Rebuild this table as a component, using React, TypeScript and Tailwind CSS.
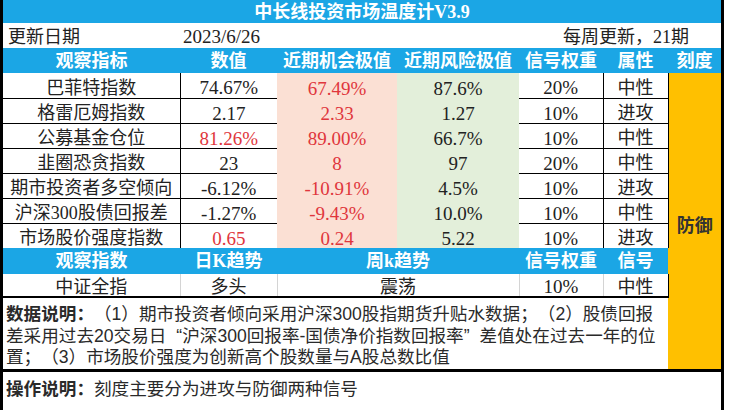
import React from "react";

const blue = "bg-[#1ba6e5]";
const font = { fontFamily: '"Liberation Serif", "Noto Sans CJK SC", serif' };
const sans = { fontFamily: '"Liberation Sans", "Noto Sans CJK SC", sans-serif' };

type Row = {
  name: string;
  value: string;
  valueRed?: boolean;
  chance: string;
  risk: string;
  weight: string;
  attr: string;
};

const rows: Row[] = [
  { name: "巴菲特指数", value: "74.67%", chance: "67.49%", risk: "87.6%", weight: "20%", attr: "中性" },
  { name: "格雷厄姆指数", value: "2.17", chance: "2.33", risk: "1.27", weight: "10%", attr: "进攻" },
  { name: "公募基金仓位", value: "81.26%", valueRed: true, chance: "89.00%", risk: "66.7%", weight: "10%", attr: "中性" },
  { name: "韭圈恐贪指数", value: "23", chance: "8", risk: "97", weight: "20%", attr: "中性" },
  { name: "期市投资者多空倾向", value: "-6.12%", chance: "-10.91%", risk: "4.5%", weight: "10%", attr: "进攻" },
  { name: "沪深300股债回报差", value: "-1.27%", chance: "-9.43%", risk: "10.0%", weight: "10%", attr: "中性" },
  { name: "市场股价强度指数", value: "0.65", valueRed: true, chance: "0.24", risk: "5.22", weight: "10%", attr: "进攻" },
];

const headers = ["观察指标", "数值", "近期机会极值", "近期风险极值", "信号权重", "属性", "刻度"];

export default function App() {
  return (
    <div className="w-[729px] h-[410px] overflow-hidden bg-white [text-spacing-trim:space-all]" style={font}>
      <div className="w-[724px] border-x-[3px] border-black text-[#222]">
        <table className="w-[718px] table-fixed border-collapse">
          <colgroup>
            <col className="w-[177px]" />
            <col className="w-[97px]" />
            <col className="w-[120px]" />
            <col className="w-[122px]" />
            <col className="w-[84px]" />
            <col className="w-[65px]" />
            <col className="w-[53px]" />
          </colgroup>
          <tbody>
            <tr className={`h-[23px] ${blue}`}>
              <td colSpan={7} className="p-0 text-center text-[18px] font-bold leading-none text-white">
                中长线投资市场温度计V3.9
              </td>
            </tr>
            <tr className="h-[25px]">
              <td className="p-0 pl-[5px] pt-[2px] text-[18px] leading-none">更新日期</td>
              <td className="p-0 pl-[3px] pt-[2px] whitespace-nowrap text-[19px] leading-none">2023/6/26</td>
              <td colSpan={5} className="p-0 pr-[32px] pt-[2px] text-right text-[18px] leading-none">
                每周更新，21期
              </td>
            </tr>
            <tr className={`h-[25px] ${blue}`}>
              {headers.map((h) => (
                <td key={h} className="p-0 text-center text-[18px] font-bold leading-none text-white whitespace-nowrap">
                  {h}
                </td>
              ))}
            </tr>
            {rows.map((r, i) => {
              const line = i < rows.length - 1 ? "border-b border-black" : "";
              return (
                <tr key={r.name} className="h-[25px] text-center leading-none">
                  <td className={`p-0 pt-[5px] text-[18px] whitespace-nowrap border-r border-black ${line}`}>{r.name}</td>
                  <td className={`p-0 pt-[5px] text-[19px] ${line} ${r.valueRed ? "text-[#e0363c]" : ""}`}>{r.value}</td>
                  <td className="p-0 pt-[5px] text-[19px] bg-[#fbe0d4] text-[#e0363c]">{r.chance}</td>
                  <td className="p-0 pt-[5px] text-[19px] bg-[#e3efda]">{r.risk}</td>
                  <td className={`p-0 pt-[5px] text-[19px] border-r border-black ${line}`}>{r.weight}</td>
                  <td className={`p-0 pt-[5px] text-[18px] border-r border-black ${line}`}>{r.attr}</td>
                  {i === 0 && (
                    <td rowSpan={10} className="p-0 pt-[10px] bg-[#ffc000] text-center align-middle text-[18px] font-bold text-[#333]">
                      防御
                    </td>
                  )}
                </tr>
              );
            })}
            <tr className={`h-[26px] ${blue} text-center text-[18px] font-bold leading-none text-white`}>
              <td className="p-0">观察指数</td>
              <td className="p-0">日K趋势</td>
              <td colSpan={2} className="p-0">周k趋势</td>
              <td className="p-0">信号权重</td>
              <td className="p-0">信号</td>
            </tr>
            <tr className="h-[23px] text-center leading-none">
              <td className="p-0 pt-[3px] text-[18px] border-r border-[#d4d4d4] border-b-2 border-b-black">中证全指</td>
              <td className="p-0 pt-[3px] text-[18px] border-r border-[#d4d4d4] border-b-2 border-b-black">多头</td>
              <td colSpan={2} className="p-0 pt-[3px] text-[18px] border-r border-[#d4d4d4] border-b-2 border-b-black">震荡</td>
              <td className="p-0 pt-[3px] text-[19px] border-r border-[#d4d4d4] border-b-2 border-b-black">10%</td>
              <td className="p-0 pt-[3px] text-[18px] border-r border-black border-b-2 border-b-black">中性</td>
            </tr>
            <tr className="h-[71px]">
              <td
                colSpan={6}
                className="p-0 pl-[3px] pt-[6px] align-middle text-[17.6px] leading-[21.5px] text-[#2a2a2a] whitespace-nowrap"
                style={sans}
              >
                <div>
                  <span className="font-bold">数据说明：</span>（1）期市投资者倾向采用沪深300股指期货升贴水数据；（2）股债回报
                </div>
                <div>
                  差采用过去20交易日<span className="ml-[10px]">“</span>沪深300回报率-国债净价指数回报率
                  <span className="mr-[10px]">”</span>差值处在过去一年的位
                </div>
                <div>置；（3）市场股价强度为创新高个股数量与A股总数比值</div>
              </td>
            </tr>
            <tr className="h-[45px]">
              <td
                colSpan={7}
                className="p-0 pl-[3px] pt-[6px] align-top border-t-[3px] border-black text-[17.6px] leading-[22px] text-[#2a2a2a]"
                style={sans}
              >
                <span className="font-bold">操作说明：</span>刻度主要分为进攻与防御两种信号
              </td>
            </tr>
          </tbody>
        </table>
      </div>
    </div>
  );
}
